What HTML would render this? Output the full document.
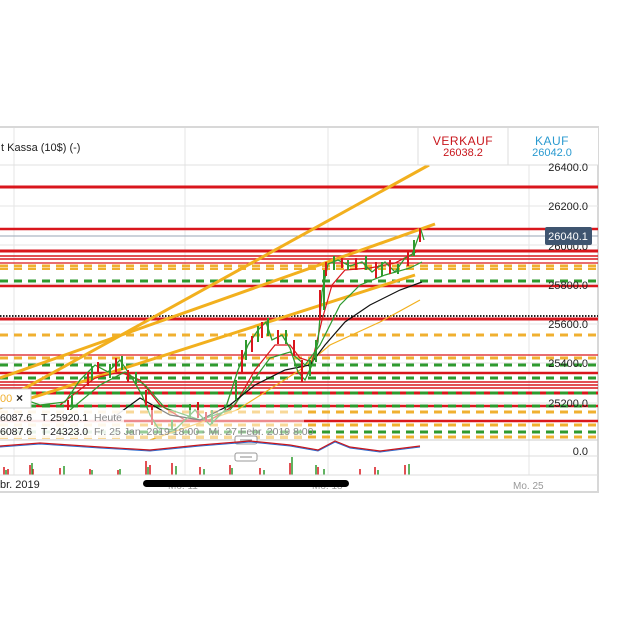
<!DOCTYPE html>
<html><head><meta charset="utf-8"><style>
html,body{margin:0;padding:0;background:#fff;width:620px;height:620px;overflow:hidden;font-family:"Liberation Sans",sans-serif}
svg{position:absolute;left:0;top:0}
</style></head><body>
<svg width="620" height="620" viewBox="0 0 620 620" font-family="Liberation Sans, sans-serif">
<rect x="0" y="0" width="620" height="620" fill="#fff"/>
<rect x="-2" y="127" width="600" height="365" fill="#fff" stroke="#d8d8d8" stroke-width="2"/>
<g stroke="#e6e6e6" stroke-width="1">
<line x1="14" y1="128" x2="14" y2="475"/><line x1="185" y1="128" x2="185" y2="475"/>
<line x1="328" y1="128" x2="328" y2="475"/><line x1="529" y1="128" x2="529" y2="475"/>
<line x1="0" y1="206" x2="598" y2="206"/>
<line x1="0" y1="245" x2="598" y2="245"/><line x1="0" y1="284" x2="598" y2="284"/>
<line x1="0" y1="324" x2="598" y2="324"/><line x1="0" y1="363" x2="598" y2="363"/>
<line x1="0" y1="403" x2="598" y2="403"/>
</g>
<line x1="0" y1="165" x2="598" y2="165" stroke="#e0e0e0"/>
<g stroke="#d9161c">
<line x1="0" y1="187" x2="598" y2="187" stroke-width="3"/>
<line x1="0" y1="229" x2="598" y2="229" stroke-width="2.5"/>
<line x1="0" y1="251" x2="598" y2="251" stroke-width="3"/>
<line x1="0" y1="256" x2="598" y2="256" stroke-width="1.5"/>
<line x1="0" y1="259" x2="598" y2="259" stroke-width="1.5"/>
<line x1="0" y1="263" x2="598" y2="263" stroke-width="1.2"/>
<line x1="0" y1="286" x2="598" y2="286" stroke-width="2.5"/>
<line x1="0" y1="319" x2="598" y2="319" stroke-width="3"/>
<line x1="0" y1="355" x2="598" y2="355" stroke-width="1.2"/>
<line x1="0" y1="373" x2="598" y2="373" stroke-width="2.5"/>
<line x1="0" y1="382" x2="598" y2="382" stroke-width="1.5"/>
<line x1="0" y1="385" x2="598" y2="385" stroke-width="1.5"/>
<line x1="0" y1="388" x2="598" y2="388" stroke-width="1.5"/>
<line x1="0" y1="393" x2="598" y2="393" stroke-width="3"/>
<line x1="0" y1="406" x2="598" y2="406" stroke-width="2.5"/>
<line x1="0" y1="421" x2="598" y2="421" stroke-width="2.5"/>
</g>
<line x1="0" y1="236" x2="598" y2="236" stroke="#9aa5b5" stroke-width="1"/>
<line x1="0" y1="316" x2="598" y2="316" stroke="#222" stroke-width="2" stroke-dasharray="1.5 1.5"/>
<g stroke-width="3" stroke-dasharray="8 6">
<line x1="0" y1="266" x2="598" y2="266" stroke="#f0b030"/>
<line x1="0" y1="269" x2="598" y2="269" stroke="#f0b030" stroke-width="2"/>
<line x1="0" y1="281" x2="598" y2="281" stroke="#2e9a2e"/>
<line x1="0" y1="335" x2="598" y2="335" stroke="#f0b030"/>
<line x1="0" y1="358" x2="598" y2="358" stroke="#f0b030"/>
<line x1="0" y1="365" x2="598" y2="365" stroke="#2e9a2e"/>
<line x1="0" y1="378" x2="598" y2="378" stroke="#2e9a2e"/>
<line x1="0" y1="393" x2="598" y2="393" stroke="#2e9a2e"/>
<line x1="0" y1="406" x2="598" y2="406" stroke="#2e9a2e"/>
<line x1="0" y1="412" x2="598" y2="412" stroke="#f0b030"/>
<line x1="0" y1="425" x2="598" y2="425" stroke="#f0b030"/>
<line x1="0" y1="432" x2="598" y2="432" stroke="#2e9a2e"/>
<line x1="0" y1="437" x2="598" y2="437" stroke="#f0b030"/>
</g>
<g stroke="#f2b01e" stroke-width="3" fill="none">
<line x1="0" y1="402" x2="429" y2="165"/>
<line x1="0" y1="378" x2="435" y2="224"/>
<line x1="0" y1="408" x2="415" y2="275"/>
</g>
<polyline points="150,440 237,410 300,370 330,345 380,322 420,300" stroke="#f2b01e" stroke-width="1.2" fill="none"/>
<polyline points="60,405 95,378 120,372 140,380 160,405 185,420 210,420 235,405 255,370 275,345 290,345 300,358 312,362 322,320 332,285 345,270 370,268 395,263 420,250" stroke="#d9161c" stroke-width="1.2" fill="none"/>
<polyline points="70,410 100,385 125,372 145,385 165,408 200,420 230,410 250,385 270,358 290,352 305,365 320,345 340,305 360,285 385,275 410,268 422,262" stroke="#2e9a2e" stroke-width="1.2" fill="none"/>
<polyline points="110,420 140,398 170,415 200,420 230,405 255,385 285,370 310,365 325,345 345,322 370,305 400,290 422,282" stroke="#111" stroke-width="1.2" fill="none"/>
<polyline points="0,402 20,398 40,405 65,402 80,380 95,365 108,372 120,360 132,378 142,395 150,415 158,428 175,430 195,410 210,425 225,410 238,370 248,345 258,330 266,322 272,340 282,335 290,348 298,372 305,380 312,365 318,342 322,292 328,264 338,260 350,266 362,262 372,272 385,262 395,272 405,258 412,255 418,238 421,230 424,240" stroke="#2e9a2e" stroke-width="1.3" fill="none"/>
<!-- candle wicks -->
<g stroke-width="2">
<path d="M68 400v10M88 372v14M98 362v12M116 358v14M128 370v12M146 390v16M152 405v20M198 402v16M206 412v10M242 350v22M252 336v16M262 322v16M278 330v14M294 340v16M302 360v22M320 290v30M326 262v14M342 258v10M356 258v12M376 262v16M390 260v14M408 252v14M420 228v14" stroke="#d9161c"/>
<path d="M72 395v12M92 366v14M110 364v14M122 356v14M136 372v12M172 420v10M190 404v14M212 410v14M236 380v20M246 340v20M258 326v16M268 318v18M286 330v14M310 360v16M316 340v22M324 270v40M334 256v14M348 260v10M366 256v14M382 262v14M398 264v10M414 240v16" stroke="#2e9a2e"/>
</g>
<rect x="418" y="128" width="180" height="37" fill="#fff"/>
<line x1="418" y1="128" x2="418" y2="165" stroke="#ddd"/>
<line x1="508" y1="128" x2="508" y2="165" stroke="#ddd"/>
<line x1="418" y1="165" x2="598" y2="165" stroke="#ddd"/>
<text x="1" y="151" font-size="11" fill="#222">t Kassa (10$) (-)</text>
<text x="463" y="145" font-size="12" fill="#c8161c" text-anchor="middle" letter-spacing="0.5">VERKAUF</text>
<text x="463" y="156" font-size="11" fill="#c8161c" text-anchor="middle">26038.2</text>
<text x="552" y="145" font-size="12" fill="#2a9ad0" text-anchor="middle" letter-spacing="0.5">KAUF</text>
<text x="552" y="156" font-size="11" fill="#2a9ad0" text-anchor="middle">26042.0</text>
<g font-size="11" fill="#222" text-anchor="end">
<text x="588" y="171">26400.0</text>
<text x="588" y="210">26200.0</text>
<text x="588" y="250">26000.0</text>
<text x="588" y="289">25800.0</text>
<text x="588" y="328">25600.0</text>
<text x="588" y="367">25400.0</text>
<text x="588" y="407">25200.0</text>
<text x="588" y="455">0.0</text>
</g>
<rect x="545" y="227" width="47" height="18" rx="2" fill="#3f5570"/>
<text x="568" y="240" font-size="11" fill="#fff" text-anchor="middle">26040.1</text>
<rect x="-2" y="389" width="33" height="19" fill="#fff" stroke="#ccc"/>
<text x="0" y="402" font-size="11" fill="#f0b030">00</text>
<text x="16" y="402" font-size="12" fill="#222" font-weight="bold">×</text>
<rect x="0" y="410" width="124" height="28" fill="#fff" opacity="0.9"/>
<rect x="124" y="410" width="180" height="28" fill="#fff" opacity="0.5"/>
<g font-size="10.5" fill="#222">
<text x="0" y="421">6087.6</text><text x="41" y="421">T 25920.1</text>
<text x="0" y="435">6087.6</text><text x="41" y="435">T 24323.0</text>
</g>
<text x="94" y="421" font-size="10.5" fill="#888">Heute</text>
<text x="94" y="435" font-size="10.5" fill="#888">Fr. 25 Jan. 2019 18:00 - Mi. 27 Febr. 2019 8:00</text>
<line x1="0" y1="440" x2="598" y2="440" stroke="#ccc"/>
<rect x="235" y="436" width="22" height="8" rx="2" fill="#fff" stroke="#999"/>
<line x1="240" y1="440" x2="252" y2="440" stroke="#888"/>
<polyline points="0,447 40,444 70,446 100,448 150,451 200,446 250,442 290,446 318,451 335,442 350,448 380,452 420,447" stroke="#2a6ad0" stroke-width="1" fill="none"/>
<polyline points="0,446 40,443 70,445 100,447 150,450 200,445 250,441 290,445 318,450 335,441 350,447 380,451 420,446" stroke="#c8161c" stroke-width="1.2" fill="none"/>
<line x1="0" y1="456" x2="598" y2="456" stroke="#ddd"/>
<rect x="235" y="453" width="22" height="8" rx="2" fill="#fff" stroke="#999"/>
<line x1="240" y1="457" x2="252" y2="457" stroke="#888"/>
<g stroke-width="1.5">
<path d="M4 475v-8M8 475v-6M30 475v-10M33 475v-6M60 475v-7M90 475v-6M118 475v-5M146 475v-14M150 475v-10M172 475v-12M200 475v-8M230 475v-10M260 475v-7M290 475v-12M318 475v-8M360 475v-6M375 475v-8M405 475v-10" stroke="#d9161c"/>
<path d="M6 475v-5M32 475v-12M64 475v-9M92 475v-5M120 475v-6M148 475v-8M176 475v-9M204 475v-6M232 475v-7M264 475v-5M292 475v-18M316 475v-10M324 475v-6M378 475v-5M409 475v-11" stroke="#2e9a2e"/>
</g>
<line x1="0" y1="475" x2="598" y2="475" stroke="#ddd"/>
<text x="0" y="488" font-size="11" fill="#222">br. 2019</text>
<g font-size="10" fill="#999"><text x="168" y="489">Mo. 11</text><text x="312" y="489">Mo. 18</text><text x="513" y="489">Mo. 25</text></g>
<rect x="143" y="480" width="206" height="7" rx="3.5" fill="#000"/>
</svg>
</body></html>
